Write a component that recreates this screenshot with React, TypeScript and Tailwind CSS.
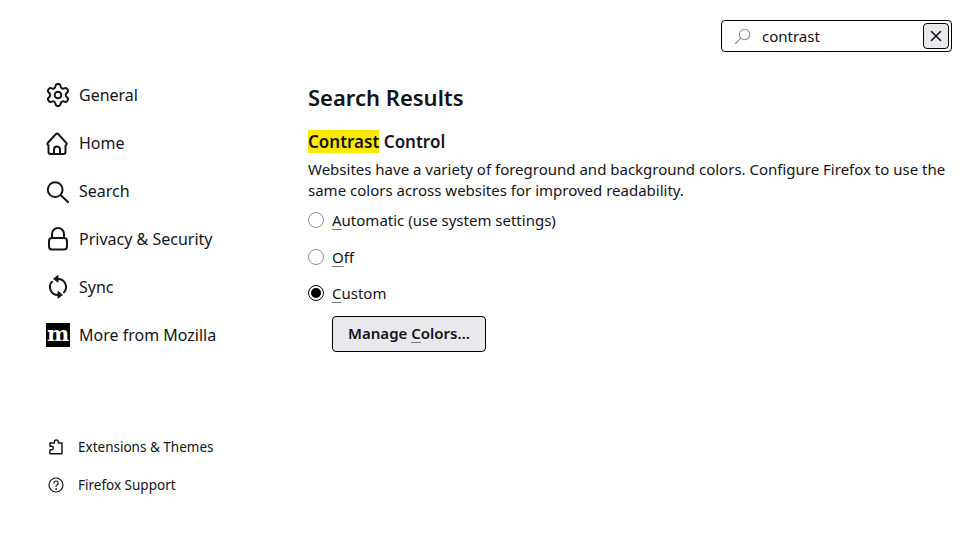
import type { ReactNode } from "react";

function Icon({ size = 24, children }: { size?: number; children: ReactNode }) {
  return (
    <svg width={size} height={size} viewBox="0 0 24 24" fill="none" stroke="currentColor" strokeWidth={2} strokeLinecap="round" strokeLinejoin="round" className="shrink-0">
      {children}
    </svg>
  );
}

const nav = [
  {
    label: "General",
    icon: (
      <svg width={24} height={24} viewBox="1.200 1.200 21.600 21.600" fill="none" stroke="currentColor" strokeWidth={1.800} strokeLinecap="round" strokeLinejoin="round" className="shrink-0">
        <path d="M9.671 4.136a2.34 2.34 0 0 1 4.659 0 2.34 2.34 0 0 0 3.319 1.915 2.34 2.34 0 0 1 2.33 4.033 2.34 2.34 0 0 0 0 3.831 2.34 2.34 0 0 1-2.33 4.033 2.34 2.34 0 0 0-3.319 1.915 2.34 2.34 0 0 1-4.659 0 2.34 2.34 0 0 0-3.32-1.915 2.34 2.34 0 0 1-2.33-4.033 2.34 2.34 0 0 0 0-3.831A2.34 2.34 0 0 1 6.35 6.051a2.34 2.34 0 0 0 3.32-1.915" />
        <circle cx="12" cy="12" r="3" />
      </svg>
    ),
  },
  {
    label: "Home",
    icon: (
      <Icon>
        <path d="M2.500 14.500l-.6-.6c-.6-.6-.6-1.500 0-2.100L10 3a1.600 1.600 0 0 1 2.200 0l8 8.800c.6.6.6 1.500 0 2.100l-.7.6V21a2 2 0 0 1-2 2h-13a2 2 0 0 1-2-2z" />
        <path d="M8 23v-4.500a3 3 0 0 1 6 0V23" />
      </Icon>
    ),
  },
  {
    label: "Search",
    icon: (
      <Icon>
        <circle cx="9.200" cy="10.600" r="7.400" />
        <path d="M15 16.600l7 6.400" />
      </Icon>
    ),
  },
  {
    label: "Privacy & Security",
    icon: (
      <Icon>
        <rect x="3" y="11" width="18" height="11.500" rx="3" />
        <path d="M6 11V7a6 6 0 0 1 12 0v4" />
      </Icon>
    ),
  },
  {
    label: "Sync",
    icon: (
      <Icon>
        <path d="M12 4A8 8 0 0 1 18 17.300" />
        <path d="M12 20A8 8 0 0 1 6 6.700" />
        <path d="M12 .8v6.400L7.800 4z" fill="currentColor" strokeWidth={1} />
        <path d="M12 16.800v6.400l4.200-3.200z" fill="currentColor" strokeWidth={1} />
      </Icon>
    ),
  },
];

function Radio({ label, u, checked }: { label: string; u: string; checked?: boolean }) {
  return (
    <div className="flex items-center gap-2 h-[20px]">
      <span className={"w-4 h-4 rounded-full flex items-center justify-center border " + (checked ? "border-black" : "border-[#8f8f9d]")}>
        {checked && <span className="w-[10px] h-[10px] rounded-full bg-black" />}
      </span>
      <span><span className="underline decoration-[#777] underline-offset-[3px]">{u}</span>{label}</span>
    </div>
  );
}

export default function App() {
  return (
    <div className="w-[980px] h-[540px] bg-white text-[15px] text-[#15141a] overflow-hidden relative flex font-['Noto_Sans',sans-serif]">
      <div className="w-[308px] pl-[46px] pt-[71px] flex flex-col">
        {nav.map((n) => (
          <div key={n.label} className="h-[48px] flex items-center gap-[9px] text-[16px]">
            {n.icon}
            <span>{n.label}</span>
          </div>
        ))}
        <div className="h-[48px] flex items-center gap-[9px] text-[16px]">
          <span className="w-6 h-6 bg-black text-white flex items-center justify-center font-bold text-[21px] leading-[24px] font-['DejaVu_Serif',serif]"><span className="-mt-[3px]">m</span></span>
          <span>More from Mozilla</span>
        </div>
        <div className="mt-[76px] flex flex-col gap-[14px] text-[13.5px]">
          <div className="h-[24px] flex items-center gap-[14px] pl-[2px]">
            <Icon size={16}>
              <path d="M3 22v-6h2.500a2.500 2.500 0 0 0 0-5H3V6h6.500V4.500a3 3 0 0 1 6 0V6H21v16z" strokeWidth={2.200} />
            </Icon>
            <span>Extensions &amp; Themes</span>
          </div>
          <div className="h-[24px] flex items-center gap-[14px] pl-[2px]">
            <Icon size={16}>
              <circle cx="12" cy="12" r="10.500" strokeWidth={1.800} />
              <path d="M8.800 9.200a3.200 3.200 0 1 1 4.800 2.800c-1 .6-1.600 1.200-1.600 2.200" strokeWidth={1.800} />
              <circle cx="12" cy="18" r=".6" strokeWidth={1.400} />
            </Icon>
            <span>Firefox Support</span>
          </div>
        </div>
      </div>
      <div className="flex-1 pt-[81px] pr-[28px]">
        <div className="text-[22px] font-semibold leading-[32px]">Search Results</div>
        <div className="mt-[17px] text-[17px] font-semibold leading-[24px]"><span className="bg-[#ffe900]">Contrast</span> Control</div>
        <p className="mt-[5px] leading-[21px]">Websites have a variety of foreground and background colors. Configure Firefox to use the same colors across websites for improved readability.</p>
        <div className="mt-[9px] flex flex-col gap-[17px]">
          <Radio u="A" label="utomatic (use system settings)" />
          <Radio u="O" label="ff" />
          <div className="-mt-[1px]"><Radio u="C" label="ustom" checked /></div>
        </div>
        <button className="ml-[24px] mt-[13px] h-[36px] w-[154px] rounded-[4px] border border-black bg-[#e9e9ed] font-semibold pb-[2px]"><span>Manage </span><span className="underline decoration-[#777] underline-offset-[3px]">C</span>olors…</button>
      </div>
      <div className="absolute left-[721px] top-[20px] w-[231px] h-[32px] rounded-[4px] border border-black flex items-center pl-[12px] pr-[2px]">
        <span className="text-[#8f8f9d]">
          <svg width={18} height={18} viewBox="0 0 24 24" fill="none" stroke="currentColor" strokeWidth={1.500} strokeLinecap="round" className="-scale-x-100">
            <circle cx="10" cy="10" r="7" />
            <path d="M15.500 15.500L22 22" />
          </svg>
        </span>
        <span className="ml-[10px] flex-1">contrast</span>
        <span className="w-[26px] h-[26px] rounded-[4px] border border-black bg-[#e9e9ed] flex items-center justify-center">
          <svg width={12} height={12} viewBox="0 0 12 12" fill="none" stroke="currentColor" strokeWidth={1.600} strokeLinecap="round"><path d="M1.500 1.500l9 9M10.500 1.500l-9 9" /></svg>
        </span>
      </div>
    </div>
  );
}
